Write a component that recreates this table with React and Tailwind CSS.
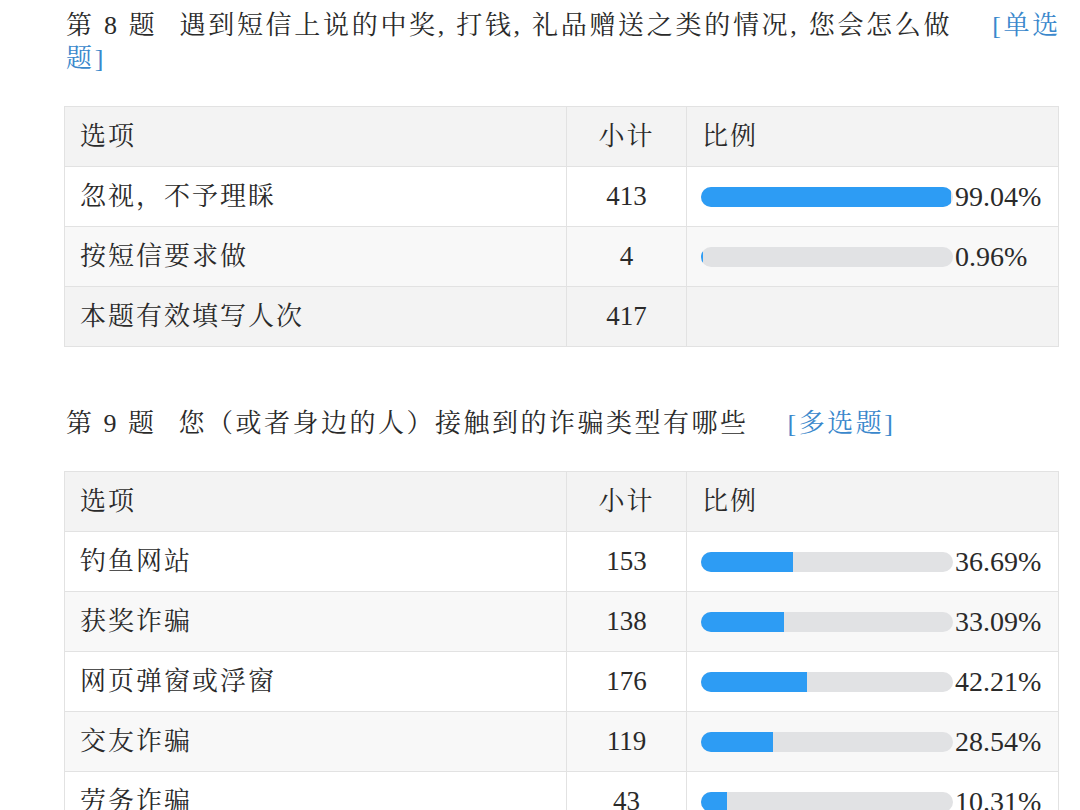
import React from "react";

const FONT = { fontFamily: '"Liberation Serif", "Noto Serif CJK SC", "Noto Sans CJK SC", serif' };

function Bar({ pct }) {
  return (
    <div className="flex items-center">
      <div className="w-[252px] h-[20px] rounded-full bg-[#e1e2e4] overflow-hidden">
        <div className="h-full bg-[#2d9cf4]" style={{ width: `${pct}%` }} />
      </div>
      <span className="ml-[2px] text-[28px] leading-none">{pct.toFixed(2)}%</span>
    </div>
  );
}

function StatTable({ rows, total }) {
  return (
    <table className="w-full border-collapse border border-[#e2e2e2] text-[#2a2a2a]">
      <tbody>
        <tr className="h-[60px] bg-[#f3f3f3]">
          <td className="w-[502px] border border-[#e2e2e2] pl-[15px] text-[26px] tracking-[2px]">选项</td>
          <td className="w-[120px] border border-[#e2e2e2] text-center text-[26px] tracking-[2px]">小计</td>
          <td className="border border-[#e2e2e2] pl-[15px] text-[26px] tracking-[2px]">比例</td>
        </tr>
        {rows.map((r, i) => (
          <tr key={r.label} className={`h-[60px] ${i % 2 === 0 ? "bg-white" : "bg-[#f8f8f8]"}`}>
            <td className="border border-[#e2e2e2] pl-[15px] text-[26px] tracking-[2px]">{r.label}</td>
            <td className="border border-[#e2e2e2] text-center text-[27px]">{r.count}</td>
            <td className="border border-[#e2e2e2] pl-[14px]">
              <Bar pct={r.pct} />
            </td>
          </tr>
        ))}
        {total !== undefined && (
          <tr className="h-[60px] bg-[#f3f3f3]">
            <td className="border border-[#e2e2e2] pl-[15px] text-[26px] tracking-[2px]">本题有效填写人次</td>
            <td className="border border-[#e2e2e2] text-center text-[27px]">{total}</td>
            <td className="border border-[#e2e2e2]"></td>
          </tr>
        )}
      </tbody>
    </table>
  );
}

export default function App() {
  return (
    <div className="w-[1080px] h-[810px] overflow-hidden bg-white pl-[64px] pr-[21px]" style={FONT}>
      <div className="pt-[9px] pl-[2px] text-[26px] leading-[33px] tracking-[2.7px] text-[#2a2a2a]">
        <div className="whitespace-nowrap">
          第 8 题<span className="inline-block w-[22px]"></span>遇到短信上说的中奖, 打钱, 礼品赠送之类的情况, 您会怎么做
          <span className="ml-[40px] text-[#3a88cc]">[单选</span>
        </div>
        <div className="text-[#3a88cc]">题]</div>
      </div>

      <div className="mt-[31px]">
        <StatTable
          rows={[
            { label: "忽视，不予理睬", count: 413, pct: 99.04 },
            { label: "按短信要求做", count: 4, pct: 0.96 },
          ]}
          total={417}
        />
      </div>

      <div className="mt-[60px] pl-[2px] text-[26px] leading-[33px] tracking-[2.5px] text-[#2a2a2a] whitespace-nowrap">
        第 9 题<span className="inline-block w-[22px]"></span>您（或者身边的人）接触到的诈骗类型有哪些
        <span className="ml-[39px] text-[#3a88cc]">[多选题]</span>
      </div>

      <div className="mt-[31px]">
        <StatTable
          rows={[
            { label: "钓鱼网站", count: 153, pct: 36.69 },
            { label: "获奖诈骗", count: 138, pct: 33.09 },
            { label: "网页弹窗或浮窗", count: 176, pct: 42.21 },
            { label: "交友诈骗", count: 119, pct: 28.54 },
            { label: "劳务诈骗", count: 43, pct: 10.31 },
          ]}
        />
      </div>
    </div>
  );
}
